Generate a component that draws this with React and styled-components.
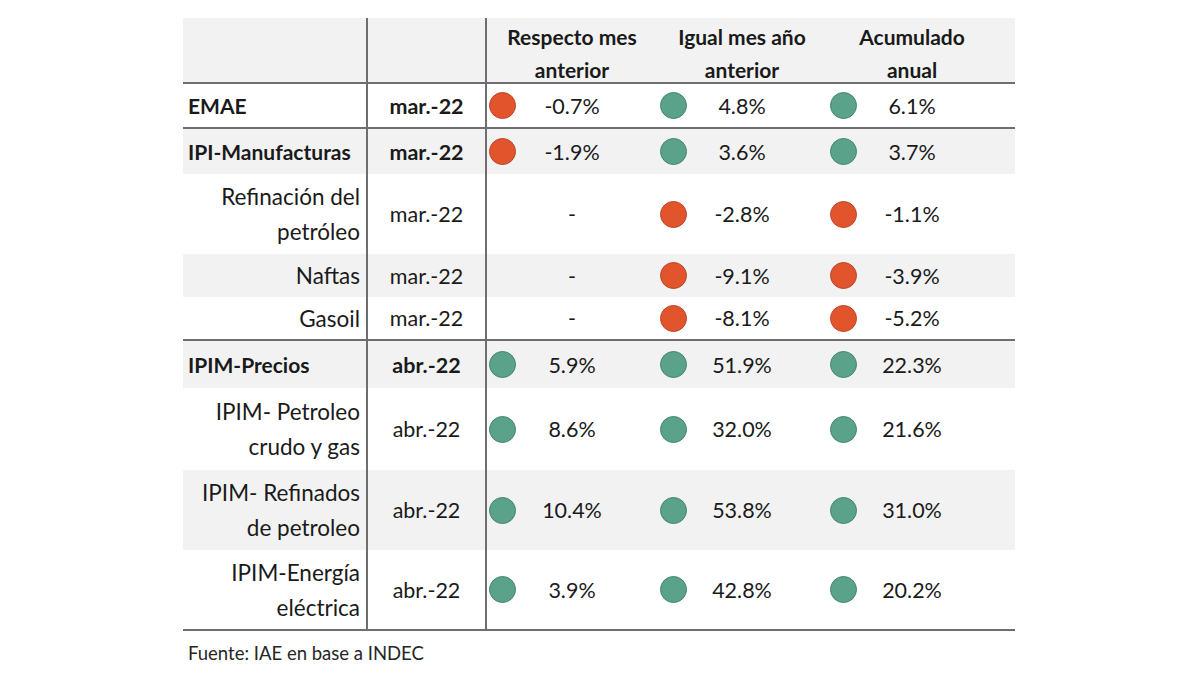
import styled, { createGlobalStyle } from "styled-components";

const GlobalStyle = createGlobalStyle`
  html, body {
    margin: 0;
    padding: 0;
    background: #ffffff;
  }
  body {
    font-family: Lato, "Liberation Sans", sans-serif;
    color: #1a1a1a;
  }
`;

const Page = styled.div`
  width: 1200px;
  height: 673px;
  box-sizing: border-box;
  padding: 18px 0 0 183px;
  background: #fff;
`;

const Table = styled.div`
  width: 832px;
`;

const Row = styled.div`
  display: grid;
  grid-template-columns: 185px 119px 170px 170px 170px;
  padding-right: 18px;
  height: ${(p) => p.h}px;
  box-sizing: border-box;
  background: ${(p) => (p.shade ? "#f2f2f2" : "#ffffff")};
  border-bottom: ${(p) => (p.line ? "2px solid #6e6e6e" : "none")};
`;

const LabelCell = styled.div`
  display: flex;
  align-items: center;
  justify-content: ${(p) => (p.bold ? "flex-start" : "flex-end")};
  text-align: ${(p) => (p.bold ? "left" : "right")};
  padding: 0 6px 0 5px;
  border-right: 2px solid #6e6e6e;
  font-size: ${(p) => (p.bold ? 21 : 22.5)}px;
  line-height: 35px;
  font-weight: ${(p) => (p.bold ? 700 : 400)};
  white-space: nowrap;
`;

const DateCell = styled.div`
  display: flex;
  align-items: center;
  justify-content: center;
  border-right: 2px solid #6e6e6e;
  font-size: 21.5px;
  font-weight: ${(p) => (p.bold ? 700 : 400)};
`;

const HeadCell = styled.div`
  display: flex;
  align-items: center;
  justify-content: center;
  text-align: center;
  font-size: 21px;
  font-weight: 700;
  line-height: 33px;
  padding-top: 2px;
  white-space: nowrap;
`;

const DataCell = styled.div`
  display: grid;
  grid-template-columns: 30px 110px;
  align-items: center;
`;

const Dot = styled.span`
  width: 27px;
  height: 27px;
  margin-left: ${(p) => p.offset}px;
  border-radius: 50%;
  box-sizing: border-box;
  background: ${(p) => (p.tone === "up" ? "#5aa38a" : "#e2552c")};
  border: 1.5px solid ${(p) => (p.tone === "up" ? "#44846e" : "#b9432a")};
`;

const Value = styled.span`
  grid-column: 2;
  text-align: center;
  font-size: 21.5px;
`;

const Source = styled.div`
  padding: 11px 0 0 5px;
  font-size: 18.5px;
  color: #262626;
`;

const rows = [
  { label: "EMAE", date: "mar.-22", bold: true, h: 45, line: true, vals: [["down", "-0.7%"], ["up", "4.8%"], ["up", "6.1%"]] },
  { label: "IPI-Manufacturas", date: "mar.-22", bold: true, h: 45, shade: true, vals: [["down", "-1.9%"], ["up", "3.6%"], ["up", "3.7%"]] },
  { label: ["Refinación del", "petróleo"], date: "mar.-22", h: 80, vals: [[null, "-"], ["down", "-2.8%"], ["down", "-1.1%"]] },
  { label: "Naftas", date: "mar.-22", h: 43, shade: true, vals: [[null, "-"], ["down", "-9.1%"], ["down", "-3.9%"]] },
  { label: "Gasoil", date: "mar.-22", h: 44, line: true, vals: [[null, "-"], ["down", "-8.1%"], ["down", "-5.2%"]] },
  { label: "IPIM-Precios", date: "abr.-22", bold: true, h: 47, shade: true, vals: [["up", "5.9%"], ["up", "51.9%"], ["up", "22.3%"]] },
  { label: ["IPIM- Petroleo", "crudo y gas"], date: "abr.-22", h: 82, vals: [["up", "8.6%"], ["up", "32.0%"], ["up", "21.6%"]] },
  { label: ["IPIM- Refinados", "de petroleo"], date: "abr.-22", h: 80, shade: true, vals: [["up", "10.4%"], ["up", "53.8%"], ["up", "31.0%"]] },
  { label: ["IPIM-Energía", "eléctrica"], date: "abr.-22", h: 81, line: true, vals: [["up", "3.9%"], ["up", "42.8%"], ["up", "20.2%"]] },
];

const headers = [
  ["Respecto mes", "anterior"],
  ["Igual mes año", "anterior"],
  ["Acumulado", "anual"],
];

const lines = (t) =>
  Array.isArray(t)
    ? t.map((s, i) => (
        <span key={i}>
          {s}
          {i < t.length - 1 && <br />}
        </span>
      ))
    : t;

export default function App() {
  return (
    <Page>
      <GlobalStyle />
      <Table>
        <Row h={66} shade line>
          <LabelCell />
          <DateCell />
          {headers.map((h, i) => (
            <HeadCell key={i}>
              <div>{lines(h)}</div>
            </HeadCell>
          ))}
        </Row>
        {rows.map((r, i) => (
          <Row key={i} h={r.h} shade={r.shade} line={r.line}>
            <LabelCell bold={r.bold}>
              <div>{lines(r.label)}</div>
            </LabelCell>
            <DateCell bold={r.bold}>{r.date}</DateCell>
            {r.vals.map(([tone, v], j) => (
              <DataCell key={j}>
                {tone && <Dot tone={tone} offset={j === 0 ? 2 : 3} />}
                <Value>{v}</Value>
              </DataCell>
            ))}
          </Row>
        ))}
      </Table>
      <Source>Fuente: IAE en base a INDEC</Source>
    </Page>
  );
}
